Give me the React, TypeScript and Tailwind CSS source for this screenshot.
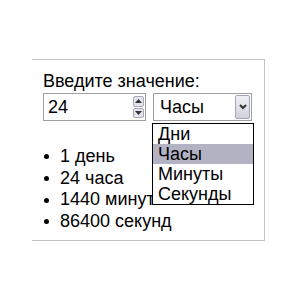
import * as React from "react";

const options = ["Дни", "Часы", "Минуты", "Секунды"];
const results = ["1 день", "24 часа", "1440 минут", "86400 секунд"];

function Spinner() {
  return (
    <div className="flex h-[22px] w-[12px] flex-col gap-[1px]">
      {[0, 1].map((i) => (
        <div key={i} className="flex flex-1 items-center justify-center rounded-[2px] border border-[#a8a8b8] bg-[#e4e4ec]">
          <svg width="7" height="4" viewBox="0 0 7 4">
            <path d={i === 0 ? "M0 4 L3.5 0 L7 4 Z" : "M0 0 L3.5 4 L7 0 Z"} fill="#333" />
          </svg>
        </div>
      ))}
    </div>
  );
}

export default function App() {
  const [value, setValue] = React.useState("24");

  return (
    <div className="h-[300px] w-[300px] bg-white pl-[32px] pt-[59px] font-['Liberation_Sans',Arial,sans-serif] text-[18px] text-black">
      <div className="relative h-[182px] w-[233px] border-y border-r border-[#c4c4c4] pl-[11px] pt-[11px]">
        <div className="leading-[21px]">Введите значение:</div>

        <div className="mt-[1px] flex gap-[7px]">
          <div className="flex h-[28px] w-[103px] items-center border border-[#a0a0a0] pl-[4px] pr-[1px]">
            <input
              value={value}
              onChange={(e) => setValue(e.target.value)}
              className="w-full min-w-0 bg-transparent outline-none"
            />
            <Spinner />
          </div>

          <div className="flex h-[28px] w-[99px] items-center justify-between border border-[#a0a0a0] pl-[6px] pr-[1px]">
            <span>Часы</span>
            <div className="flex h-[24px] w-[15px] items-center justify-center rounded-[2px] border border-[#a4a4bc] bg-gradient-to-b from-[#f0f0f6] to-[#d2d2de]">
              <svg width="8" height="6" viewBox="0 0 8 6">
                <path d="M1 1 L4 4 L7 1" stroke="#333" strokeWidth="2" fill="none" />
              </svg>
            </div>
          </div>
        </div>

        <ul className="mt-[25px] leading-[21.7px]">
          {results.map((r) => (
            <li key={r} className="flex items-center">
              <span className="ml-[1px] mr-[11px] h-[5px] w-[5px] rounded-full bg-black" />
              {r}
            </li>
          ))}
        </ul>

        <div className="absolute left-[120px] top-[63px] w-[102px] border border-black bg-white">
          {options.map((o) => (
            <div key={o} className={`h-[20px] pl-[5px] leading-[20px] ${o === "Часы" ? "bg-[#b2b2c2]" : ""}`}>
              {o}
            </div>
          ))}
        </div>
      </div>
    </div>
  );
}
